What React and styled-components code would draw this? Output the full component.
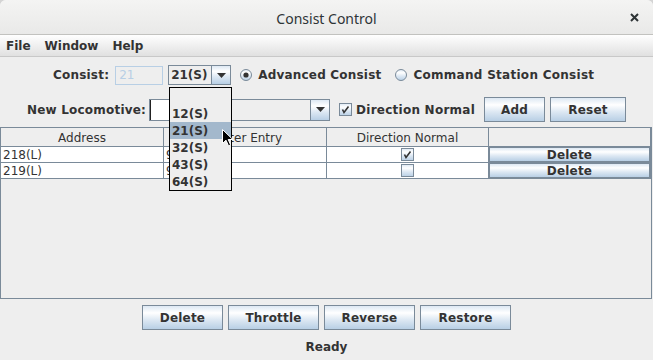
import React from 'react';
import styled, { createGlobalStyle } from 'styled-components';

const Global = createGlobalStyle`
  html, body { margin: 0; padding: 0; background: #d4d4d4; }
  body { width: 653px; height: 360px; overflow: hidden; }
  * { box-sizing: border-box; }
`;

const GRAD = 'linear-gradient(to bottom, #dde8f3 0%, #ffffff 30%, #dde8f3 60%, #b8cfe5 100%)';

const Window = styled.div`
  position: relative;
  width: 653px;
  height: 360px;
  background: #eeeeee;
  display: flex;
  flex-direction: column;
  border-radius: 6px 6px 0 0;
  overflow: hidden;
  font-family: "DejaVu Sans", "Liberation Sans", sans-serif;
  font-size: 12px;
  color: #333333;
`;

const TitleBar = styled.div`
  flex: none;
  height: 35px;
  border-bottom: 1px solid #c2c2bf;
  background: linear-gradient(#f4f4f3, #e9e9e8);
  display: grid;
  grid-template-columns: 1fr auto 1fr;
  align-items: center;
`;

const Title = styled.div`
  grid-column: 2;
  font-family: "Noto Sans", "DejaVu Sans", sans-serif;
  font-size: 14px;
  color: #2e3436;
  padding-top: 2px;
`;

const CloseBox = styled.div`
  grid-column: 3;
  justify-self: end;
  margin-right: 14px;
  display: flex;
  padding-top: 1px;
`;

const MenuBar = styled.div`
  flex: none;
  height: 22px;
  display: flex;
  align-items: center;
  background: linear-gradient(#ffffff, #e0e0e0);
  border-bottom: 1px solid #c8c8c8;
`;

const MenuItem = styled.span`
  padding: 0 7px;
  font-weight: bold;
  &:first-child { padding-left: 6px; }
`;

const Row = styled.div`
  flex: none;
  display: flex;
  align-items: center;
  height: ${p => p.$h}px;
  margin-top: ${p => p.$mt}px;
  padding-left: ${p => p.$pl}px;
`;

const Label = styled.span`
  font-weight: bold;
  letter-spacing: 0.2px;
  white-space: nowrap;
`;

const TextField = styled.div`
  width: ${p => p.$w}px;
  height: ${p => p.$h}px;
  margin-left: ${p => p.$ml}px;
  border: 1px solid ${p => (p.$disabled ? '#b8cfe5' : '#7a8a99')};
  background: ${p => (p.$disabled ? '#eeeeee' : '#ffffff')};
  color: #b8cfe5;
  padding-left: 3px;
  display: flex;
  align-items: center;
  box-shadow: ${p => (p.$caret ? 'inset 1px 0 0 #222' : 'none')};
`;

const Combo = styled.div`
  width: ${p => p.$w}px;
  height: ${p => p.$h}px;
  margin-left: ${p => p.$ml}px;
  border: 1px solid #7a8a99;
  background: #eeeeee;
  display: flex;
`;

const ComboValue = styled.div`
  flex: 1;
  padding-left: 2px;
  font-weight: bold;
  display: flex;
  align-items: center;
`;

const ComboArrow = styled.div`
  width: 19px;
  border-left: 1px solid #7a8a99;
  background: ${GRAD};
  display: flex;
  align-items: center;
  justify-content: center;
`;

const Choice = styled.label`
  display: flex;
  align-items: center;
  gap: ${p => p.$gap}px;
  margin-left: ${p => p.$ml}px;
  font-weight: bold;
  letter-spacing: ${p => p.$ls}px;
  white-space: nowrap;
`;

const Button = styled.div`
  flex: none;
  width: ${p => p.$w}px;
  height: 25px;
  margin-left: ${p => p.$ml || 0}px;
  border: 1px solid #7a8a99;
  background: ${GRAD};
  font-weight: bold;
  letter-spacing: 0.2px;
  display: flex;
  align-items: center;
  justify-content: center;
`;

const Scroll = styled.div`
  flex: none;
  width: 652px;
  height: 172px;
  margin-top: 5px;
  border: 1px solid #7a8a99;
  background: #eeeeee;
`;

const Grid = styled.div`
  display: grid;
  grid-template-columns: 163px 163px 162px 162px;
`;

const HeadCell = styled.div`
  height: 19px;
  border-right: 1px solid #7a8a99;
  border-bottom: 1px solid #7a8a99;
  background: #eeeeee;
  display: flex;
  align-items: center;
  justify-content: center;
  padding-top: 1px;
`;

const Cell = styled.div`
  height: 16px;
  border-right: 1px solid #7a8a99;
  border-bottom: 1px solid #7a8a99;
  background: #ffffff;
  display: flex;
  align-items: center;
  justify-content: ${p => (p.$center ? 'center' : 'flex-start')};
  padding-left: ${p => (p.$center ? 0 : 2)}px;
  white-space: nowrap;
  overflow: hidden;
`;

const CellButton = styled.div`
  width: 100%;
  height: 100%;
  border: 1px solid #7a8a99;
  background: ${GRAD};
  font-weight: bold;
  letter-spacing: 0.2px;
  display: flex;
  align-items: center;
  justify-content: center;
  line-height: 13px;
  padding-top: 1px;
`;

const ButtonBar = styled.div`
  flex: none;
  display: flex;
  justify-content: center;
  gap: 5px;
  margin-top: 6px;
`;

const Status = styled.div`
  flex: none;
  text-align: center;
  font-weight: bold;
  line-height: 14px;
  padding-top: 10px;
`;

const Popup = styled.div`
  position: absolute;
  left: 169px;
  top: 87px;
  width: 63px;
  border: 1px solid #000000;
  background: #eeeeee;
  display: flex;
  flex-direction: column;
`;

const PopupItem = styled.div`
  height: 17px;
  padding-left: 2px;
  font-weight: bold;
  display: flex;
  align-items: center;
  background: ${p => (p.$sel ? '#a3b8cc' : 'transparent')};
`;

const Cursor = styled.svg`
  position: absolute;
  left: 222px;
  top: 129px;
`;

const Arrow = () => (
  <svg width="9" height="5" viewBox="0 0 9 5">
    <path d="M0 0 H9 L4.5 5 Z" fill="#333333" />
  </svg>
);

const RadioIcon = ({ checked }) => (
  <svg width="12" height="12" viewBox="0 0 12 12">
    <defs>
      <linearGradient id="rgrad" x1="0" y1="0" x2="0" y2="1">
        <stop offset="0" stopColor="#dde8f3" />
        <stop offset="0.3" stopColor="#ffffff" />
        <stop offset="0.6" stopColor="#dde8f3" />
        <stop offset="1" stopColor="#b8cfe5" />
      </linearGradient>
    </defs>
    <circle cx="6" cy="6" r="5.5" fill="url(#rgrad)" stroke="#7a8a99" />
    {checked && <circle cx="6" cy="6" r="2.6" fill="#333333" />}
  </svg>
);

const CheckIcon = ({ checked }) => (
  <svg width="13" height="13" viewBox="0 0 13 13">
    <rect x="0.5" y="0.5" width="12" height="12" fill="url(#rgrad)" stroke="#7a8a99" />
    {checked && (
      <path d="M3.5 6.5 L5 9.5 L9.5 3.5" fill="none" stroke="#333333" strokeWidth="1.6" />
    )}
  </svg>
);

const CloseIcon = () => (
  <svg width="9" height="9" viewBox="0 0 9 9">
    <path d="M1 1 L8 8 M8 1 L1 8" stroke="#2e3436" strokeWidth="2" />
  </svg>
);

const rows = [
  { addr: '218(L)', roster: '9', dir: true },
  { addr: '219(L)', roster: '9', dir: false },
];

export default function App() {
  return (
    <>
      <Global />
      <Window>
        <TitleBar>
          <Title>Consist Control</Title>
          <CloseBox><CloseIcon /></CloseBox>
        </TitleBar>
        <MenuBar>
          <MenuItem>File</MenuItem>
          <MenuItem>Window</MenuItem>
          <MenuItem>Help</MenuItem>
        </MenuBar>

        <Row $h={20} $mt={8} $pl={53}>
          <Label>Consist:</Label>
          <TextField $w={48} $h={19} $ml={6} $disabled>21</TextField>
          <Combo $w={63} $h={20} $ml={5}>
            <ComboValue>21(S)</ComboValue>
            <ComboArrow><Arrow /></ComboArrow>
          </Combo>
          <Choice $gap={6} $ml={9} $ls={0.2}><RadioIcon checked />Advanced Consist</Choice>
          <Choice $gap={6} $ml={14} $ls={0.28}><RadioIcon />Command Station Consist</Choice>
        </Row>

        <Row $h={25} $mt={12} $pl={27}>
          <Label>New Locomotive:</Label>
          <TextField $w={50} $h={22} $ml={3} $caret />
          <Combo $w={126} $h={22} $ml={5}>
            <ComboValue />
            <ComboArrow><Arrow /></ComboArrow>
          </Combo>
          <Choice $gap={4} $ml={9} $ls={0.25}><CheckIcon checked />Direction Normal</Choice>
          <Button $w={61} $ml={9}>Add</Button>
          <Button $w={76} $ml={5}>Reset</Button>
        </Row>

        <Scroll>
          <Grid>
            <HeadCell>Address</HeadCell>
            <HeadCell>Roster Entry</HeadCell>
            <HeadCell>Direction Normal</HeadCell>
            <HeadCell />
            {rows.map(r => (
              <React.Fragment key={r.addr}>
                <Cell>{r.addr}</Cell>
                <Cell>{r.roster}</Cell>
                <Cell $center><CheckIcon checked={r.dir} /></Cell>
                <Cell $center><CellButton>Delete</CellButton></Cell>
              </React.Fragment>
            ))}
          </Grid>
        </Scroll>

        <ButtonBar>
          <Button $w={81}>Delete</Button>
          <Button $w={91}>Throttle</Button>
          <Button $w={91}>Reverse</Button>
          <Button $w={91}>Restore</Button>
        </ButtonBar>

        <Status>Ready</Status>

        <Popup>
          <PopupItem />
          <PopupItem>12(S)</PopupItem>
          <PopupItem $sel>21(S)</PopupItem>
          <PopupItem>32(S)</PopupItem>
          <PopupItem>43(S)</PopupItem>
          <PopupItem>64(S)</PopupItem>
        </Popup>
        <Cursor width="12" height="18" viewBox="0 0 12 18">
          <path d="M0.5 0.5 L0.5 14.5 L4 11.2 L6.5 16.8 L8.6 15.9 L6.2 10.5 L10.8 10.5 Z" fill="#000000" stroke="#ffffff" strokeWidth="1" />
        </Cursor>
      </Window>
    </>
  );
}
